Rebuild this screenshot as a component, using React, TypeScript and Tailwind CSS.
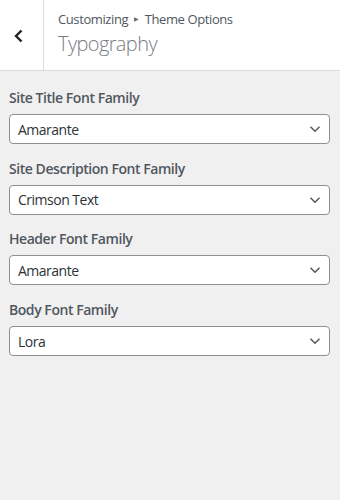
const fields = [
  { label: "Site Title Font Family", value: "Amarante" },
  { label: "Site Description Font Family", value: "Crimson Text" },
  { label: "Header Font Family", value: "Amarante" },
  { label: "Body Font Family", value: "Lora" },
];

const Chevron = () => (
  <svg width="12" height="8" viewBox="0 0 12 8" fill="none">
    <path d="M1.5 1.8 L6 6.2 L10.5 1.8" stroke="#50575e" strokeWidth="1.5" />
  </svg>
);

const App = () => {
  return (
    <div
      className="w-[340px] h-[500px] bg-[#f0f0f1] overflow-hidden"
      style={{ fontFamily: '"Open Sans", "Noto Sans", sans-serif' }}
    >
      <div className="flex h-[71px] bg-white border-b border-[#dcdcde]">
        <button className="w-[44px] h-full flex items-center pl-[13px] pt-[1px] border-r border-[#dcdcde]">
          <svg width="12" height="14" viewBox="0 0 12 14" fill="none">
            <path d="M8.5 1.5 L3 7 L8.5 12.5" stroke="#1d2327" strokeWidth="2.4" />
          </svg>
        </button>
        <div className="pl-[14px] pt-[9px]">
          <div className="flex items-center text-[13px] leading-[20px] tracking-[-0.4px] text-[#50575e]">
            <span>Customizing</span>
            <span className="mx-[6px] text-[6px] text-[#646970]">▶</span>
            <span>Theme Options</span>
          </div>
          <div className="text-[20px] leading-[28px] font-light tracking-[-0.6px] text-[#787c82] mt-[1px]">
            Typography
          </div>
        </div>
      </div>
      <div className="pl-[9px] pr-[10px] pt-[16px]">
        {fields.map((f) => (
          <div key={f.label} className="mb-[13.7px]">
            <div className="text-[14px] leading-[20px] pt-[1px] font-semibold tracking-[-0.45px] text-[#50575e] mb-[6px]">
              {f.label}
            </div>
            <div className="h-[30px] flex items-center justify-between bg-white border border-[#8c8f94] rounded-[4px] pl-[8px] pr-[8px]">
              <span className="text-[14px] tracking-[-0.5px] text-[#2c3338]">{f.value}</span>
              <Chevron />
            </div>
          </div>
        ))}
      </div>
    </div>
  );
};

export default App;
